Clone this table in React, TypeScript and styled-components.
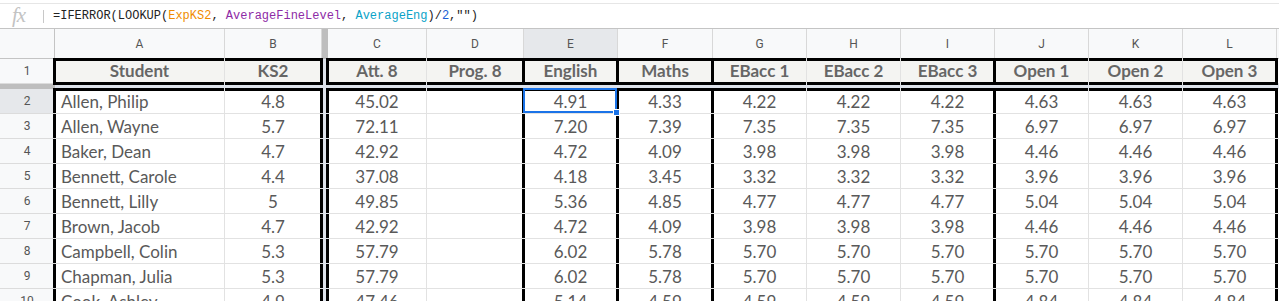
import React from 'react';
import styled, { createGlobalStyle, css } from 'styled-components';

const GlobalStyle = createGlobalStyle`
  html, body { margin: 0; padding: 0; background: #ffffff; overflow: hidden; }
  body { font-family: 'Lato', 'Open Sans', sans-serif; }
  * { box-sizing: border-box; }
`;

const GRID = '#e2e2e2';
const HEAD_LINE = '#c4c4c4';
const FREEZE_DARK = '#bebebe';
const FREEZE_LIGHT = '#dde2ea';

const Page = styled.div`
  width: 1279px;
  height: 301px;
  overflow: hidden;
  display: flex;
  flex-direction: column;
`;

const FormulaBar = styled.div`
  height: 26px;
  margin-top: 3px;
  border-top: 1px solid #e6e6e6;
  border-bottom: 1px solid ${HEAD_LINE};
  display: flex;
  align-items: center;
  padding-left: 12px;
  flex: none;
`;

const Fx = styled.span`
  font-family: 'Liberation Serif', serif;
  font-style: italic;
  font-size: 21px;
  color: #c3c3c3;
  width: 18px;
  line-height: 1;
  margin-top: -1px;
  letter-spacing: -1px;
`;

const Divider = styled.span`
  width: 1px;
  height: 13px;
  background: #c8c8c8;
  margin-left: 13px;
  margin-right: 9px;
`;

const Formula = styled.span`
  font-family: 'Liberation Mono', 'DejaVu Sans Mono', monospace;
  font-size: 12px;
  color: #222;
  white-space: pre;
`;

const Token = styled.span<{ $c: string }>`
  color: ${(p) => p.$c};
`;

const Sheet = styled.div`
  display: grid;
  grid-template-columns: 55px 170px 97px 6px 99px 97px 94px 95px 94px 94px 94px 94px 94px 94px 1fr;
  grid-template-rows: 30px 25px 5px repeat(9, 25px);
`;

const ColHead = styled.div<{ $selected?: boolean }>`
  background: ${(p) => (p.$selected ? '#e6e8eb' : '#f8f9fa')};
  border-right: 1px solid #d8d8d8;
  border-bottom: 1px solid ${HEAD_LINE};
  display: flex;
  align-items: center;
  justify-content: center;
  font-family: 'Roboto', 'Liberation Sans', sans-serif;
  font-size: 12px;
  color: #555;
`;

const Corner = styled.div`
  background: #f8f9fa;
  border-right: 1px solid ${HEAD_LINE};
  border-bottom: 1px solid ${HEAD_LINE};
`;

const RowHead = styled.div<{ $selected?: boolean }>`
  background: ${(p) => (p.$selected ? '#e6e8eb' : '#f8f9fa')};
  border-right: 1px solid ${HEAD_LINE};
  border-bottom: 1px solid #dcdcdc;
  display: flex;
  align-items: center;
  justify-content: center;
  font-family: 'Roboto', 'Liberation Sans', sans-serif;
  font-size: 12px;
  color: #555;
`;

const FreezeV = styled.div<{ $header?: boolean }>`
  background: ${(p) => (p.$header ? FREEZE_DARK : FREEZE_LIGHT)};
`;

const FreezeCorner = styled.div`
  background: ${FREEZE_DARK};
`;

const FreezeBand = styled.div`
  grid-column: 2 / -1;
  background: ${FREEZE_LIGHT};
`;

type Edges = { $t?: boolean; $r?: boolean; $b?: boolean; $l?: boolean };

const Cell = styled.div<Edges & { $head?: boolean; $left?: boolean }>`
  position: relative;
  border-right: 1px solid ${GRID};
  border-bottom: 1px solid ${GRID};
  background: ${(p) => (p.$head ? '#f4f4f2' : '#ffffff')};
  display: flex;
  align-items: center;
  justify-content: ${(p) => (p.$left ? 'flex-start' : 'center')};
  padding: 0 ${(p) => (p.$left ? '6px' : '2px')};
  padding-bottom: ${(p) => (p.$head ? '1px' : '0')};
  font-family: 'Lato', 'Open Sans', sans-serif;
  font-size: 17px;
  font-weight: ${(p) => (p.$head ? 700 : 400)};
  color: ${(p) => (p.$head ? '#666666' : '#595959')};
  white-space: nowrap;
  overflow: visible;
  ${(p) =>
    (p.$t || p.$r || p.$b || p.$l) &&
    css`
      &::after {
        content: '';
        position: absolute;
        pointer-events: none;
        z-index: 2;
        top: ${p.$t ? '-1px' : '0'};
        bottom: ${p.$b ? '-2px' : '0'};
        left: ${p.$l ? '-2px' : '0'};
        right: ${p.$r ? '-2px' : '0'};
        border-style: solid;
        border-color: #000;
        border-width: ${p.$t ? 3 : 0}px ${p.$r ? 3 : 0}px ${p.$b ? 3 : 0}px ${p.$l ? 3 : 0}px;
      }
    `}
`;

const Selection = styled.div`
  position: absolute;
  top: -1px;
  left: -1px;
  right: 0;
  bottom: 0;
  border: 2px solid #1a73e8;
  z-index: 3;
  pointer-events: none;
`;

const Handle = styled.div`
  position: absolute;
  right: -5px;
  bottom: -5px;
  width: 7px;
  height: 7px;
  background: #1a73e8;
  border: 1px solid #fff;
`;

const letters = ['A', 'B', 'C', 'D', 'E', 'F', 'G', 'H', 'I', 'J', 'K', 'L'];
const headers = ['Student', 'KS2', 'Att. 8', 'Prog. 8', 'English', 'Maths', 'EBacc 1', 'EBacc 2', 'EBacc 3', 'Open 1', 'Open 2', 'Open 3'];

// thick edge on the left of these column indexes, and on the right of these
const thickLeft = new Set([0, 2, 4, 5, 6, 9]);
const thickRight = new Set([1, 11]);

const rows: string[][] = [
  ['Allen, Philip', '4.8', '45.02', '', '4.91', '4.33', '4.22', '4.22', '4.22', '4.63', '4.63', '4.63'],
  ['Allen, Wayne', '5.7', '72.11', '', '7.20', '7.39', '7.35', '7.35', '7.35', '6.97', '6.97', '6.97'],
  ['Baker, Dean', '4.7', '42.92', '', '4.72', '4.09', '3.98', '3.98', '3.98', '4.46', '4.46', '4.46'],
  ['Bennett, Carole', '4.4', '37.08', '', '4.18', '3.45', '3.32', '3.32', '3.32', '3.96', '3.96', '3.96'],
  ['Bennett, Lilly', '5', '49.85', '', '5.36', '4.85', '4.77', '4.77', '4.77', '5.04', '5.04', '5.04'],
  ['Brown, Jacob', '4.7', '42.92', '', '4.72', '4.09', '3.98', '3.98', '3.98', '4.46', '4.46', '4.46'],
  ['Campbell, Colin', '5.3', '57.79', '', '6.02', '5.78', '5.70', '5.70', '5.70', '5.70', '5.70', '5.70'],
  ['Chapman, Julia', '5.3', '57.79', '', '6.02', '5.78', '5.70', '5.70', '5.70', '5.70', '5.70', '5.70'],
  ['Cook, Ashley', '4.9', '47.46', '', '5.14', '4.59', '4.59', '4.59', '4.59', '4.84', '4.84', '4.84'],
];

function withFreeze(items: React.ReactNode[], freeze: React.ReactNode): React.ReactNode[] {
  return [...items.slice(0, 2), freeze, ...items.slice(2)];
}

export default function App() {
  const headerCells = letters.map((l) => (
    <ColHead key={l} $selected={l === 'E'}>{l}</ColHead>
  ));

  const titleCells = headers.map((h, i) => (
    <Cell key={h} $head $t $b $l={thickLeft.has(i)} $r={thickRight.has(i)}>
      {h}
    </Cell>
  ));

  return (
    <Page>
      <GlobalStyle />
      <FormulaBar>
        <Fx>fx</Fx>
        <Divider />
        <Formula>
          =IFERROR(LOOKUP(<Token $c="#f08c00">ExpKS2</Token>, <Token $c="#8e2ba6">AverageFineLevel</Token>,{' '}
          <Token $c="#0aa3c8">AverageEng</Token>)/<Token $c="#1a5fd6">2</Token>,"")
        </Formula>
      </FormulaBar>
      <Sheet>
        <Corner />
        {withFreeze(headerCells, <FreezeV key="fz" $header />)}
        <ColHead />

        <RowHead>1</RowHead>
        {withFreeze(titleCells, <FreezeV key="fz" $header={false} />)}
        <Cell />

        <FreezeCorner />
        <FreezeBand />

        {rows.map((r, ri) => {
          const cells = r.map((v, ci) => (
            <Cell
              key={ci}
              $left={ci === 0}
              $t={ri === 0}
              $l={thickLeft.has(ci)}
              $r={thickRight.has(ci)}
            >
              {v}
              {ri === 0 && ci === 4 && (
                <Selection>
                  <Handle />
                </Selection>
              )}
            </Cell>
          ));
          return (
            <React.Fragment key={ri}>
              <RowHead $selected={ri === 0}>{ri + 2}</RowHead>
              {withFreeze(cells, <FreezeV key="fz" />)}
              <Cell />
            </React.Fragment>
          );
        })}
      </Sheet>
    </Page>
  );
}
